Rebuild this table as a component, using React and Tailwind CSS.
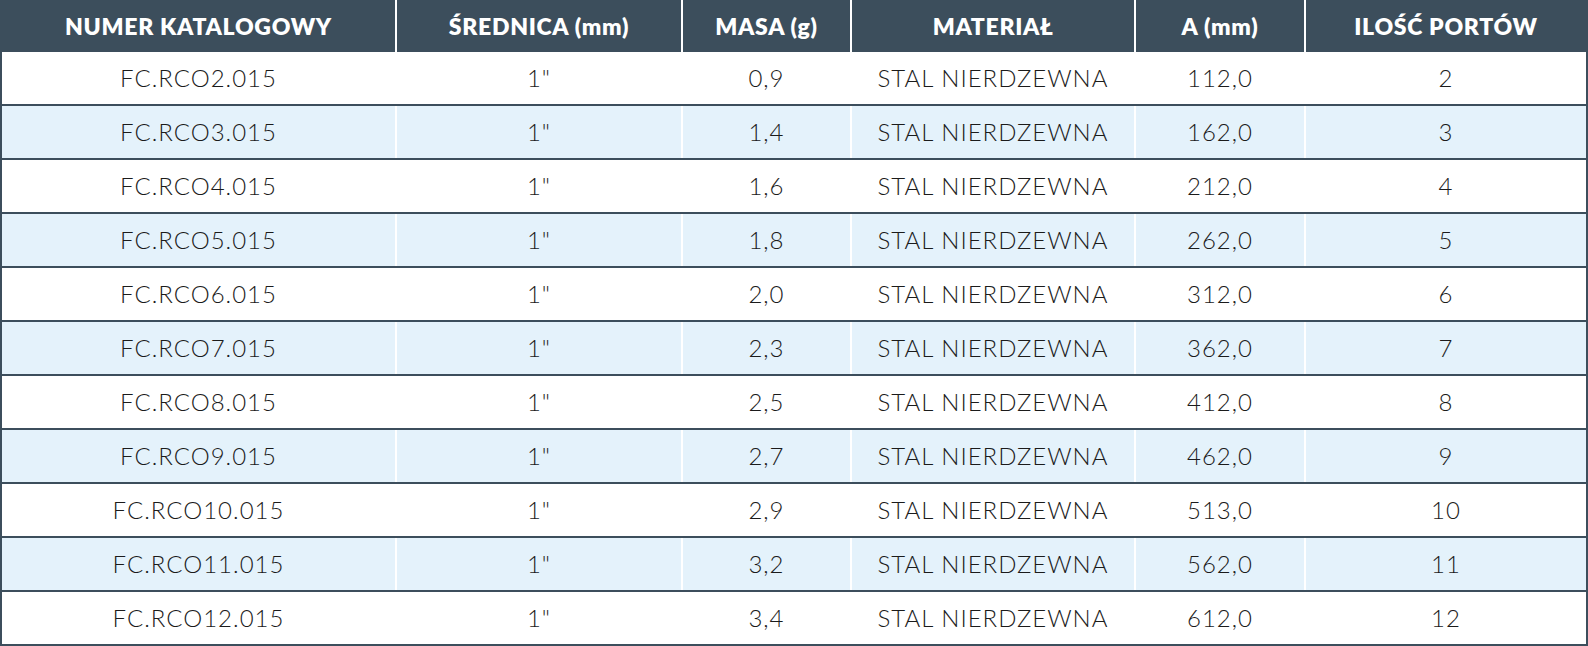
import React from "react";

const columns = [
  { label: "NUMER KATALOGOWY", width: "w-[395px]" },
  { label: "ŚREDNICA (mm)", width: "w-[286px]" },
  { label: "MASA (g)", width: "w-[169px]" },
  { label: "MATERIAŁ", width: "w-[284px]" },
  { label: "A (mm)", width: "w-[170px]" },
  { label: "ILOŚĆ PORTÓW", width: "w-[280px]" },
];

const rows = [
  ["FC.RCO2.015", "1\"", "0,9", "STAL NIERDZEWNA", "112,0", "2"],
  ["FC.RCO3.015", "1\"", "1,4", "STAL NIERDZEWNA", "162,0", "3"],
  ["FC.RCO4.015", "1\"", "1,6", "STAL NIERDZEWNA", "212,0", "4"],
  ["FC.RCO5.015", "1\"", "1,8", "STAL NIERDZEWNA", "262,0", "5"],
  ["FC.RCO6.015", "1\"", "2,0", "STAL NIERDZEWNA", "312,0", "6"],
  ["FC.RCO7.015", "1\"", "2,3", "STAL NIERDZEWNA", "362,0", "7"],
  ["FC.RCO8.015", "1\"", "2,5", "STAL NIERDZEWNA", "412,0", "8"],
  ["FC.RCO9.015", "1\"", "2,7", "STAL NIERDZEWNA", "462,0", "9"],
  ["FC.RCO10.015", "1\"", "2,9", "STAL NIERDZEWNA", "513,0", "10"],
  ["FC.RCO11.015", "1\"", "3,2", "STAL NIERDZEWNA", "562,0", "11"],
  ["FC.RCO12.015", "1\"", "3,4", "STAL NIERDZEWNA", "612,0", "12"],
];

export default function App() {
  return (
    <div className="w-[1588px] h-[646px] bg-white font-['Lato',sans-serif]">
      <div className="border-x-2 border-[#3c4e5c]">
        <div className="flex h-[52px] bg-[#3c4e5c]">
          {columns.map((col, i) => (
            <div
              key={col.label}
              className={`${col.width} flex items-center justify-center text-white font-extrabold text-[23px] tracking-[0.7px] ${i < columns.length - 1 ? "border-r-2 border-white" : ""}`}
            >
              {col.label}
            </div>
          ))}
        </div>
        {rows.map((row, r) => (
          <div
            key={row[0]}
            className={`flex h-[54px] border-b-2 border-[#3c4e5c] ${r % 2 === 1 ? "bg-[#e4f2fb]" : "bg-white"}`}
          >
            {row.map((cell, i) => (
              <div
                key={i}
                className={`${columns[i].width} flex items-center justify-center text-[24px] font-light tracking-[1px] text-[#1b1b1b] ${i < row.length - 1 ? "border-r-2 border-white" : ""}`}
              >
                {cell}
              </div>
            ))}
          </div>
        ))}
      </div>
    </div>
  );
}
